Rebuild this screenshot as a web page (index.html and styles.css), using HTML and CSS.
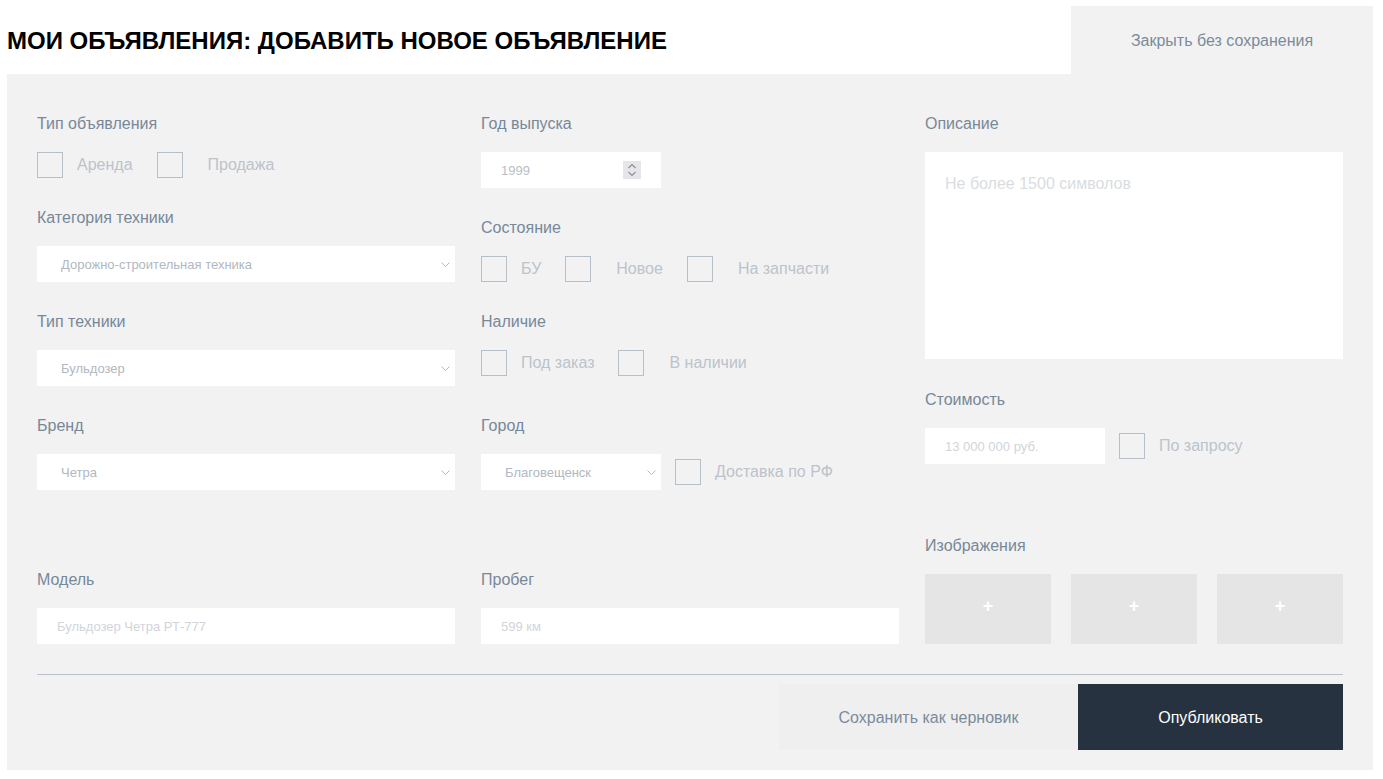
FILE: index.html
```html
<!DOCTYPE html>
<html lang="ru">
<head>
<meta charset="utf-8">
<title>Добавить новое объявление</title>
<link rel="stylesheet" href="styles.css">
</head>
<body>
<div class="page">
  <header class="top">
    <h1 class="title">МОИ ОБЪЯВЛЕНИЯ: ДОБАВИТЬ НОВОЕ ОБЪЯВЛЕНИЕ</h1>
    <button class="close-btn" type="button">Закрыть без сохранения</button>
  </header>

  <main class="panel">
    <div class="cols">
      <!-- Column 1 -->
      <div class="col">
        <div class="field mb30">
          <div class="label">Тип объявления</div>
          <div class="checks">
            <label class="opt first"><span class="box"></span><span class="opt-text">Аренда</span></label>
            <label class="opt"><span class="box"></span><span class="opt-text">Продажа</span></label>
          </div>
        </div>
        <div class="field mb30">
          <div class="label">Категория техники</div>
          <div class="select"><span class="sel-text">Дорожно-строительная техника</span><svg class="chev" width="9" height="5" viewBox="0 0 9 5"><polyline points="0.5,0.5 4.5,4.5 8.5,0.5" fill="none" stroke="#b3bac3" stroke-width="1"/></svg></div>
        </div>
        <div class="field mb30">
          <div class="label">Тип техники</div>
          <div class="select"><span class="sel-text">Бульдозер</span><svg class="chev" width="9" height="5" viewBox="0 0 9 5"><polyline points="0.5,0.5 4.5,4.5 8.5,0.5" fill="none" stroke="#b3bac3" stroke-width="1"/></svg></div>
        </div>
        <div class="field mb80">
          <div class="label">Бренд</div>
          <div class="select"><span class="sel-text">Четра</span><svg class="chev" width="9" height="5" viewBox="0 0 9 5"><polyline points="0.5,0.5 4.5,4.5 8.5,0.5" fill="none" stroke="#b3bac3" stroke-width="1"/></svg></div>
        </div>
        <div class="field">
          <div class="label">Модель</div>
          <div class="input"><span class="ph">Бульдозер Четра РТ-777</span></div>
        </div>
      </div>

      <!-- Column 2 -->
      <div class="col">
        <div class="field mb30">
          <div class="label">Год выпуска</div>
          <div class="input short">
            <span class="val">1999</span>
            <span class="spin">
              <svg width="10" height="14" viewBox="0 0 10 14"><polyline points="1.5,5 5,1.5 8.5,5" fill="none" stroke="#8e8e9c" stroke-width="1.2"/><polyline points="1.5,9 5,12.5 8.5,9" fill="none" stroke="#8e8e9c" stroke-width="1.2"/></svg>
            </span>
          </div>
        </div>
        <div class="field mb30">
          <div class="label">Состояние</div>
          <div class="checks">
            <label class="opt first"><span class="box"></span><span class="opt-text">БУ</span></label>
            <label class="opt"><span class="box"></span><span class="opt-text">Новое</span></label>
            <label class="opt"><span class="box"></span><span class="opt-text">На запчасти</span></label>
          </div>
        </div>
        <div class="field mb40">
          <div class="label">Наличие</div>
          <div class="checks">
            <label class="opt first"><span class="box"></span><span class="opt-text">Под заказ</span></label>
            <label class="opt"><span class="box"></span><span class="opt-text">В наличии</span></label>
          </div>
        </div>
        <div class="field mb80">
          <div class="label">Город</div>
          <div class="inline-row">
            <div class="select short"><span class="sel-text">Благовещенск</span><svg class="chev" width="9" height="5" viewBox="0 0 9 5"><polyline points="0.5,0.5 4.5,4.5 8.5,0.5" fill="none" stroke="#b3bac3" stroke-width="1"/></svg></div>
            <label class="opt first"><span class="box"></span><span class="opt-text">Доставка по РФ</span></label>
          </div>
        </div>
        <div class="field">
          <div class="label">Пробег</div>
          <div class="input"><span class="ph">599 км</span></div>
        </div>
      </div>

      <!-- Column 3 -->
      <div class="col">
        <div class="field mb31">
          <div class="label">Описание</div>
          <div class="textarea"><span class="ph big">Не более 1500 символов</span></div>
        </div>
        <div class="field mb72">
          <div class="label">Стоимость</div>
          <div class="inline-row">
            <div class="input short"><span class="ph">13 000 000 руб.</span></div>
            <label class="opt first"><span class="box"></span><span class="opt-text">По запросу</span></label>
          </div>
        </div>
        <div class="field">
          <div class="label">Изображения</div>
          <div class="images">
            <div class="img-slot">+</div>
            <div class="img-slot">+</div>
            <div class="img-slot">+</div>
          </div>
        </div>
      </div>
    </div>

    <div class="divider"></div>

    <div class="actions">
      <button class="btn btn-draft" type="button">Сохранить как черновик</button>
      <button class="btn btn-publish" type="button">Опубликовать</button>
    </div>
  </main>
</div>
</body>
</html>
```

FILE: styles.css
```css
* {
  box-sizing: border-box;
}

html, body {
  margin: 0;
  padding: 0;
  background: #ffffff;
}

body {
  font-family: "Liberation Sans", Arial, sans-serif;
}

.page {
  padding: 6px 10px 0 7px;
  width: 1383px;
}

.top {
  display: flex;
  align-items: center;
  justify-content: space-between;
  height: 68px;
}

.title {
  margin: 0;
  font-size: 24px;
  font-weight: bold;
  color: #000000;
  line-height: 28px;
  padding-top: 2px;
}

.close-btn {
  width: 302px;
  height: 68px;
  border: 0;
  background: #f2f2f2;
  color: #7b8b9c;
  font-family: "Liberation Sans", Arial, sans-serif;
  font-size: 16px;
  padding: 2px 0 0 0;
  cursor: pointer;
}

.panel {
  background: #f2f2f2;
  padding: 40px 30px 20px 30px;
}

.cols {
  display: grid;
  grid-template-columns: repeat(3, 1fr);
  column-gap: 26px;
}

.col {
  display: flex;
  flex-direction: column;
}

.field.mb30 { margin-bottom: 30px; }
.field.mb31 { margin-bottom: 31px; }
.field.mb40 { margin-bottom: 40px; }
.field.mb72 { margin-bottom: 72px; }
.field.mb80 { margin-bottom: 80px; }

.label {
  font-size: 16px;
  line-height: 18px;
  padding-top: 1px;
  color: #778899;
  margin-bottom: 19px;
}

.checks {
  display: flex;
  align-items: center;
  height: 26px;
  gap: 24px;
}

.opt {
  display: flex;
  align-items: center;
  gap: 25px;
  cursor: pointer;
}

.opt.first {
  gap: 14px;
}

.box {
  width: 26px;
  height: 26px;
  border: 1px solid #b7c0c9;
  background: transparent;
  flex: none;
}

.opt-text {
  font-size: 16px;
  line-height: 18px;
  color: #bcc3cc;
  padding-bottom: 1px;
}

.select {
  height: 36px;
  background: #ffffff;
  display: flex;
  align-items: center;
  justify-content: space-between;
  padding: 0 5px 0 24px;
}

.sel-text {
  font-size: 13px;
  color: #b1b8c0;
}

.chev {
  display: block;
  margin-top: 1px;
}

.input {
  height: 36px;
  background: #ffffff;
  display: flex;
  align-items: center;
  justify-content: space-between;
  padding: 0 20px;
}

.short {
  width: 180px;
  flex: none;
}

.select.short {
  padding-right: 5px;
}

.ph {
  font-size: 13px;
  color: #d0d5db;
}

.ph.big {
  font-size: 16px;
  color: #d9dde2;
}

.val {
  font-size: 13px;
  color: #b7bec6;
}

.spin {
  width: 18px;
  height: 18px;
  background: #e6e6ea;
  display: flex;
  align-items: center;
  justify-content: center;
}

.spin svg {
  display: block;
}

.inline-row {
  display: flex;
  align-items: center;
  gap: 14px;
}

.textarea {
  height: 207px;
  margin-top: 1px;
  background: #ffffff;
  padding: 23px 20px;
}

.images {
  display: flex;
  gap: 20px;
}

.img-slot {
  flex: 1;
  height: 70px;
  background: #e5e5e5;
  color: #ffffff;
  font-size: 18px;
  font-weight: bold;
  display: flex;
  align-items: center;
  justify-content: center;
  padding-bottom: 5px;
}

.divider {
  margin-top: 30px;
  height: 1px;
  background: #b9c2cb;
}

.actions {
  margin-top: 9px;
  display: flex;
  justify-content: flex-end;
}

.btn {
  height: 66px;
  border: 0;
  font-family: "Liberation Sans", Arial, sans-serif;
  font-size: 16px;
  padding: 2px 0 0 0;
  cursor: pointer;
}

.btn-draft {
  width: 299px;
  background: #efefef;
  color: #7b8b9c;
}

.btn-publish {
  width: 265px;
  background: #263240;
  color: #ffffff;
}
```
